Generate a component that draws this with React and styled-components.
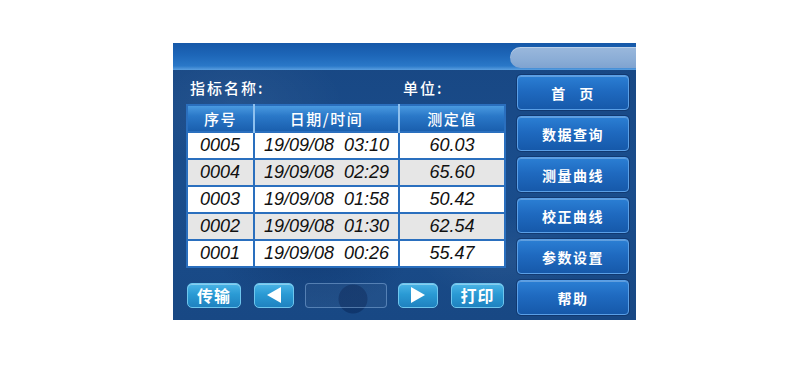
import React from 'react';
import styled, { createGlobalStyle } from 'styled-components';

const GlobalStyle = createGlobalStyle`
  html, body {
    margin: 0;
    padding: 0;
    background: #fff;
  }
  body {
    font-family: "Noto Sans CJK SC", "Liberation Sans", sans-serif;
  }
`;

const Page = styled.div`
  width: 800px;
  height: 366px;
  padding: 43px 0 0 173px;
  box-sizing: border-box;
`;

const Panel = styled.div`
  width: 463px;
  height: 277px;
  display: grid;
  grid-template-rows: 27px 1fr;
  background:
    radial-gradient(circle at 180px 256px, rgba(8, 40, 90, 0.55) 0 14px, transparent 15px),
    radial-gradient(ellipse 120px 60px at 330px 215px, rgba(255, 255, 255, 0.05), transparent 70%),
    radial-gradient(ellipse 160px 90px at 60px 60px, rgba(255, 255, 255, 0.05), transparent 70%),
    radial-gradient(ellipse 140px 80px at 140px 210px, rgba(10, 40, 90, 0.35), transparent 70%),
    linear-gradient(180deg, #184783 0%, #1a4d8c 50%, #184884 100%);
  overflow: hidden;
`;

const Header = styled.div`
  display: flex;
  justify-content: flex-end;
  align-items: center;
  background: linear-gradient(180deg, #1658a8 0%, #1d66b8 45%, #2a78c8 85%, #5a9fe0 100%);
`;

const Pill = styled.div`
  width: 126px;
  height: 21px;
  margin-top: 2px;
  border-radius: 11px 0 0 11px;
  background: linear-gradient(180deg, #9ab8dc 0%, #8badd6 60%, #7fa3d0 100%);
  box-shadow: inset 0 1px 0 rgba(255, 255, 255, 0.35);
`;

const Body = styled.div`
  display: flex;
`;

const Main = styled.div`
  width: 344px;
  padding: 5px 0 0 13px;
  box-sizing: border-box;
  display: flex;
  flex-direction: column;
`;

const LabelRow = styled.div`
  display: flex;
  height: 24px;
  align-items: center;
  padding-left: 4px;
  margin-bottom: 5px;
`;

const Label = styled.span`
  color: #fff;
  font-size: 15px;
  font-weight: 500;
  letter-spacing: 2px;
  width: ${(p) => p.$w || 'auto'};
`;

const Table = styled.table`
  width: 318px;
  border-collapse: collapse;
  border: 2px solid #2a6fbe;
  table-layout: fixed;
`;

const Th = styled.th`
  height: 25px;
  padding: 0;
  color: #fff;
  font-size: 15px;
  font-weight: 500;
  letter-spacing: 1.5px;
  background: linear-gradient(180deg, #4a9ae0 0%, #2a78c8 40%, #1a5fae 100%);
  border-left: 2px solid #8ec0ee;
  &:first-child {
    border-left: none;
  }
`;

const Td = styled.td`
  height: 25px;
  padding: 0;
  font-family: "Liberation Sans", "DejaVu Sans", sans-serif;
  font-style: italic;
  font-size: 18px;
  color: #111;
  white-space: pre;
  text-align: ${(p) => p.$align || 'center'};
  padding-left: ${(p) => p.$pl || '0'};
  background: ${(p) => (p.$alt ? '#e6e6e6' : '#ffffff')};
  border: 2px solid #2a6fbe;
`;

const BottomRow = styled.div`
  display: flex;
  align-items: center;
  margin-top: 14px;
  height: 26px;
`;

const SmallButton = styled.div`
  width: ${(p) => p.$w}px;
  height: 25px;
  margin-left: ${(p) => p.$ml || 0}px;
  box-sizing: border-box;
  display: flex;
  align-items: center;
  justify-content: center;
  color: #fff;
  font-size: 16px;
  font-weight: 700;
  letter-spacing: 1px;
  border-radius: 5px;
  border: 1px solid #6ec6ee;
  background: linear-gradient(180deg, #4ab4e6 0%, #2a9ad4 45%, #1f82c0 100%);
  box-shadow: inset 0 1px 0 rgba(255, 255, 255, 0.35);
`;

const EmptyBox = styled.div`
  width: 82px;
  height: 25px;
  margin-left: 11px;
  box-sizing: border-box;
  border-radius: 4px;
  border: 1px solid rgba(150, 190, 235, 0.45);
  background: rgba(255, 255, 255, 0.04);
`;

const Side = styled.div`
  padding: 5px 0 0 0;
  display: flex;
  flex-direction: column;
  gap: 6px;
`;

const SideButton = styled.div`
  width: 112px;
  height: 35px;
  box-sizing: border-box;
  display: flex;
  align-items: center;
  justify-content: center;
  color: #fff;
  font-size: 14px;
  font-weight: 700;
  letter-spacing: 1.5px;
  word-spacing: 8px;
  border-radius: 4px;
  border: 1px solid #5a9fe6;
  background: linear-gradient(180deg, #2b7fd4 0%, #1f6ac0 45%, #1659aa 100%);
  box-shadow: inset 0 1px 0 rgba(255, 255, 255, 0.25), 0 0 0 1px rgba(10, 40, 90, 0.5);
`;

const Triangle = ({ dir }) => (
  <svg width="16" height="18" viewBox="0 0 16 18">
    {dir === 'left' ? (
      <polygon points="15,1 15,17 1,9" fill="#fff" />
    ) : (
      <polygon points="1,1 1,17 15,9" fill="#fff" />
    )}
  </svg>
);

const rows = [
  ['0005', '19/09/08  03:10', '60.03'],
  ['0004', '19/09/08  02:29', '65.60'],
  ['0003', '19/09/08  01:58', '50.42'],
  ['0002', '19/09/08  01:30', '62.54'],
  ['0001', '19/09/08  00:26', '55.47'],
];

const menu = ['首 页', '数据查询', '测量曲线', '校正曲线', '参数设置', '帮助'];

const App = () => {
  return (
    <Page>
      <GlobalStyle />
      <Panel>
        <Header>
          <Pill />
        </Header>
        <Body>
          <Main>
            <LabelRow>
              <Label $w="213px">指标名称:</Label>
              <Label>单位:</Label>
            </LabelRow>
            <Table>
              <colgroup>
                <col style={{ width: '67px' }} />
                <col style={{ width: '145px' }} />
                <col style={{ width: '106px' }} />
              </colgroup>
              <thead>
                <tr>
                  <Th>序号</Th>
                  <Th>日期/时间</Th>
                  <Th>测定值</Th>
                </tr>
              </thead>
              <tbody>
                {rows.map((r, i) => (
                  <tr key={r[0]}>
                    <Td $alt={i % 2 === 1} $align="left" $pl="12px">{r[0]}</Td>
                    <Td $alt={i % 2 === 1}>{r[1]}</Td>
                    <Td $alt={i % 2 === 1}>{r[2]}</Td>
                  </tr>
                ))}
              </tbody>
            </Table>
            <BottomRow>
              <SmallButton $w={54} $ml={1}>传输</SmallButton>
              <SmallButton $w={40} $ml={13}><Triangle dir="left" /></SmallButton>
              <EmptyBox />
              <SmallButton $w={40} $ml={11}><Triangle dir="right" /></SmallButton>
              <SmallButton $w={53} $ml={13}>打印</SmallButton>
            </BottomRow>
          </Main>
          <Side>
            {menu.map((m) => (
              <SideButton key={m}>{m}</SideButton>
            ))}
          </Side>
        </Body>
      </Panel>
    </Page>
  );
};

export default App;
